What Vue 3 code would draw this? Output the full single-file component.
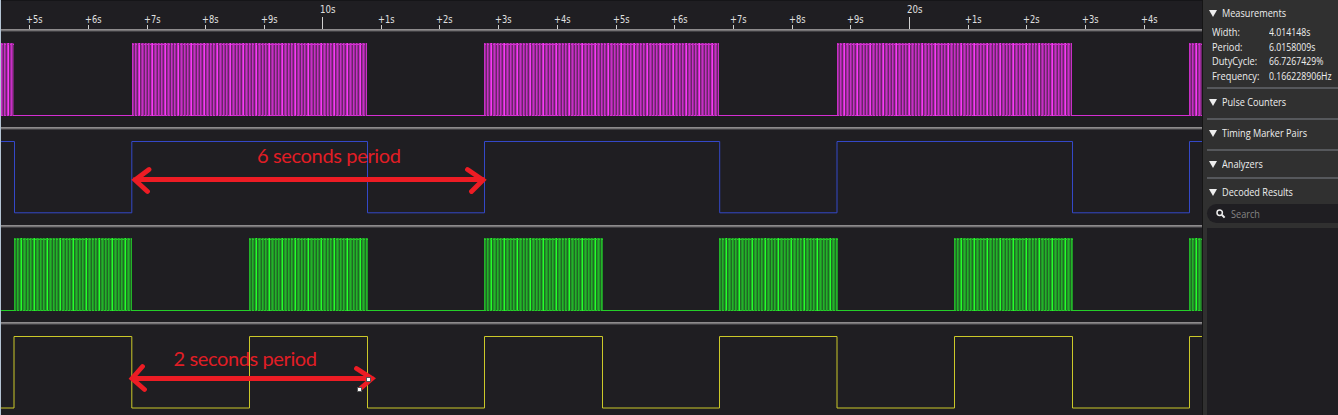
<script setup>
const ticks = [
  [30, '+5s'], [89, '+6s'], [148, '+7s'], [206, '+8s'], [265, '+9s'], [323, '10s', 1],
  [382, '+1s'], [440, '+2s'], [499, '+3s'], [558, '+4s'], [617, '+5s'], [675, '+6s'],
  [734, '+7s'], [793, '+8s'], [851, '+9s'], [910, '20s', 1], [969, '+1s'], [1027, '+2s'],
  [1086, '+3s'], [1145, '+4s']
].map(([x, label, major]) => ({ x, label, major }))

const rails = [29, 127, 225, 322]
const magenta = [[1, 14], [132, 367], [484, 719], [837, 1072], [1189, 1202]]
const green = [[14, 132], [249, 368], [484, 603], [719, 838], [954, 1073], [1189, 1202]]

function columns(bursts) {
  const light = []
  const bright = []
  const gap = []
  for (const [a, b] of bursts) {
    for (let x = a; x < b; x++) {
      const m = (x - a) % 13
      if (m === 7) bright.push(x)
      else if ([0, 3, 6, 10].includes(m)) light.push(x)
      else if ([2, 5, 8, 12].includes(m)) gap.push(x)
    }
  }
  return { light, bright, gap }
}
const path = (xs, top, h) => xs.map(x => `M${x} ${top}h1v${h}h-1z`).join('')
const bands = [
  { name: 'magenta', top: 43, bursts: magenta, cols: columns(magenta) },
  { name: 'green', top: 238, bursts: green, cols: columns(green) }
]
const sections = ['Pulse Counters', 'Timing Marker Pairs', 'Analyzers', 'Decoded Results']
const stats = [['Width:', '4.014148s'], ['Period:', '6.0158009s'], ['DutyCycle:', '66.7267429%'], ['Frequency:', '0.166228906Hz']]
</script>

<template>
  <main class="app">
    <svg class="scope" width="1202" height="415" viewBox="0 0 1202 415">
      <rect width="1203" height="415" fill="#1f1e22" />
      <rect width="1203" height="1" fill="#151518" />
      <g v-for="t in ticks" :key="t.x">
        <rect :x="t.x - 1" :y="t.major ? 17 : 25" width="1" :height="t.major ? 12 : 4" fill="#d0d0d0" />
        <text class="tick" :x="t.major ? t.x - 3 : t.x - 4" :y="t.major ? 13 : 23" :textLength="t.major ? 15.5 : 16.5" lengthAdjust="spacingAndGlyphs">{{ t.label }}</text>
      </g>
      <g v-for="y in rails" :key="y">
        <rect x="0" :y="y" width="1203" height="1" fill="#8d8b8d" />
        <rect x="0" :y="y + 1" width="1203" height="1" fill="#737173" />
        <rect x="0" :y="y + 2" width="1203" height="1" fill="#3f3e42" />
      </g>
      <g v-for="b in bands" :key="b.name" :class="b.name" shape-rendering="crispEdges">
        <rect class="line" x="1" :y="b.top + 72" width="1202" height="1" />
        <rect v-for="s in b.bursts" :key="s[0]" class="base" :x="s[0]" :y="b.top" :width="s[1] - s[0]" height="73" />
        <path class="light" :d="path(b.cols.light, b.top, 73)" />
        <path class="bright" :d="path(b.cols.bright, b.top, 73)" />
        <path class="gap" :d="path(b.cols.gap, b.top, 73)" />
        <path v-for="s in b.bursts" :key="'e' + s[0]" class="cap" :d="`M${s[0]} ${b.top + 1.5}H${s[1]}M${s[0]} ${b.top + 72.5}H${s[1]}`" />
      </g>
      <path class="wave blue" d="M1 141.5H14.5V212.8H131.8V141.5H367.5V212.8H484.5V141.5H719.7V212.8H837V141.5H1072.5V212.8H1189.5V141.5H1203" />
      <path class="wave yellow" d="M1 408H14V336.5H131.8V408H249.5V336.5H367.5V408H484.5V336.5H602.5V408H719.5V336.5H837V408H954.5V336.5H1072.5V408H1189.5V336.5H1203" />
      <path class="arrow" d="M135 179.5H483M149 169.5L135 180L147.5 191.5M467.500 169.500L483 180L471.500 191.5" />
      <path class="arrow" d="M133 378.5H372M142.5 366.500L132 378.5L144.5 389.500M356.5 368.500L372 378.5L361 388" />
      <text class="note" x="257" y="163" textLength="144">6 seconds period</text>
      <text class="note" x="173.5" y="366" textLength="143.5">2 seconds period</text>
      <g fill="#fff" stroke="#555" stroke-width="1">
        <rect x="366.5" y="377.5" width="4" height="4" />
        <rect x="357.5" y="387.5" width="4" height="4" />
      </g>
      <rect width="1" height="415" fill="#b4c4d4" />
    </svg>
    <aside class="side">
      <section class="measure">
        <h2><i class="tri"></i><span class="title">Measurements</span></h2>
        <dl>
          <template v-for="s in stats" :key="s[0]"><dt>{{ s[0] }}</dt><dd>{{ s[1] }}</dd></template>
        </dl>
      </section>
      <section v-for="(s, i) in sections" :key="s" :class="'sec sec' + i"><h2><i class="tri"></i><span class="title">{{ s }}</span></h2></section>
      <div class="search">
        <svg width="10" height="10" viewBox="0 0 10 10"><circle cx="3.7" cy="3.7" r="2.7" fill="none" stroke="#eee" stroke-width="1.5" /><path d="M5.8 5.8L8.6 8.6" stroke="#eee" stroke-width="2" /></svg>
        <span class="title">Search</span>
      </div>
      <div class="results"></div>
    </aside>
  </main>
</template>

<style>
body { background: #1f1e22; overflow: hidden; }
</style>
<style scoped>
.app { display: flex; width: 1338px; height: 415px; font-family: "Open Sans", "Noto Sans", sans-serif; overflow: hidden; background: #303030; }
.scope { display: block; flex: none; }
.tick { font: 10.5px "DejaVu Sans", sans-serif; fill: #e0e0e0; }
.wave { fill: none; stroke-width: 1; }
.blue { stroke: #3448c8; }
.yellow { stroke: #cbc829; }
.magenta { --base: #9a2b99; --light: #c82ec6; --bright: #f83af5; --gap: #6a2569; --line: #d42ed2; }
.green { --base: #229328; --light: #22b428; --bright: #24ff2a; --gap: #206925; --line: #24cf29; }
.base { fill: var(--base); }
.light { fill: var(--light); }
.bright { fill: var(--bright); }
.gap { fill: var(--gap); }
.line { fill: var(--line); }
.cap { stroke: var(--line); stroke-dasharray: 2 1; }
.arrow { fill: none; stroke: #ed1c24; stroke-width: 4.8; stroke-linecap: round; }
.note { font: 20px Lato, sans-serif; fill: #e11d25; }
.side { width: 136px; box-sizing: border-box; flex: none; padding-left: 4px; border-left: 1px solid #151515; color: #eee; }
h2 { margin: 0; font-size: 10.5px; line-height: 14px; font-weight: 400; display: flex; align-items: center; white-space: nowrap; }
.title { display: inline-block; transform: scaleX(0.87); transform-origin: left center; }
.tri { width: 0; height: 0; border: 4px solid transparent; border-top: 7px solid #eee; border-bottom: 0; margin: 0 5px 0 2px; }
.measure { height: 87px; padding-top: 6px; box-sizing: border-box; }
dl { margin: 5px 0 0 5px; display: grid; grid-template-columns: 57px 70px; grid-auto-rows: 14.6px; line-height: 14px; font-size: 10.5px; }
dt, dd { margin: 0; white-space: nowrap; transform-origin: left center; transform: scaleX(0.88); }
dd { transform: scaleX(0.83); }
.sec { border-top: 2px solid #56585c; height: 31px; box-sizing: border-box; padding-top: 6px; }
.sec2 { height: 28px; }
.sec3 { height: 27px; }
.search { height: 19px; box-sizing: border-box; border-radius: 10px 0 0 10px; background: #1f1e22; display: flex; align-items: center; padding-left: 9px; gap: 5px; color: #858585; font-size: 10.5px; }
.results { margin-top: 5px; height: 187px; background: #1f1e22; }
</style>
